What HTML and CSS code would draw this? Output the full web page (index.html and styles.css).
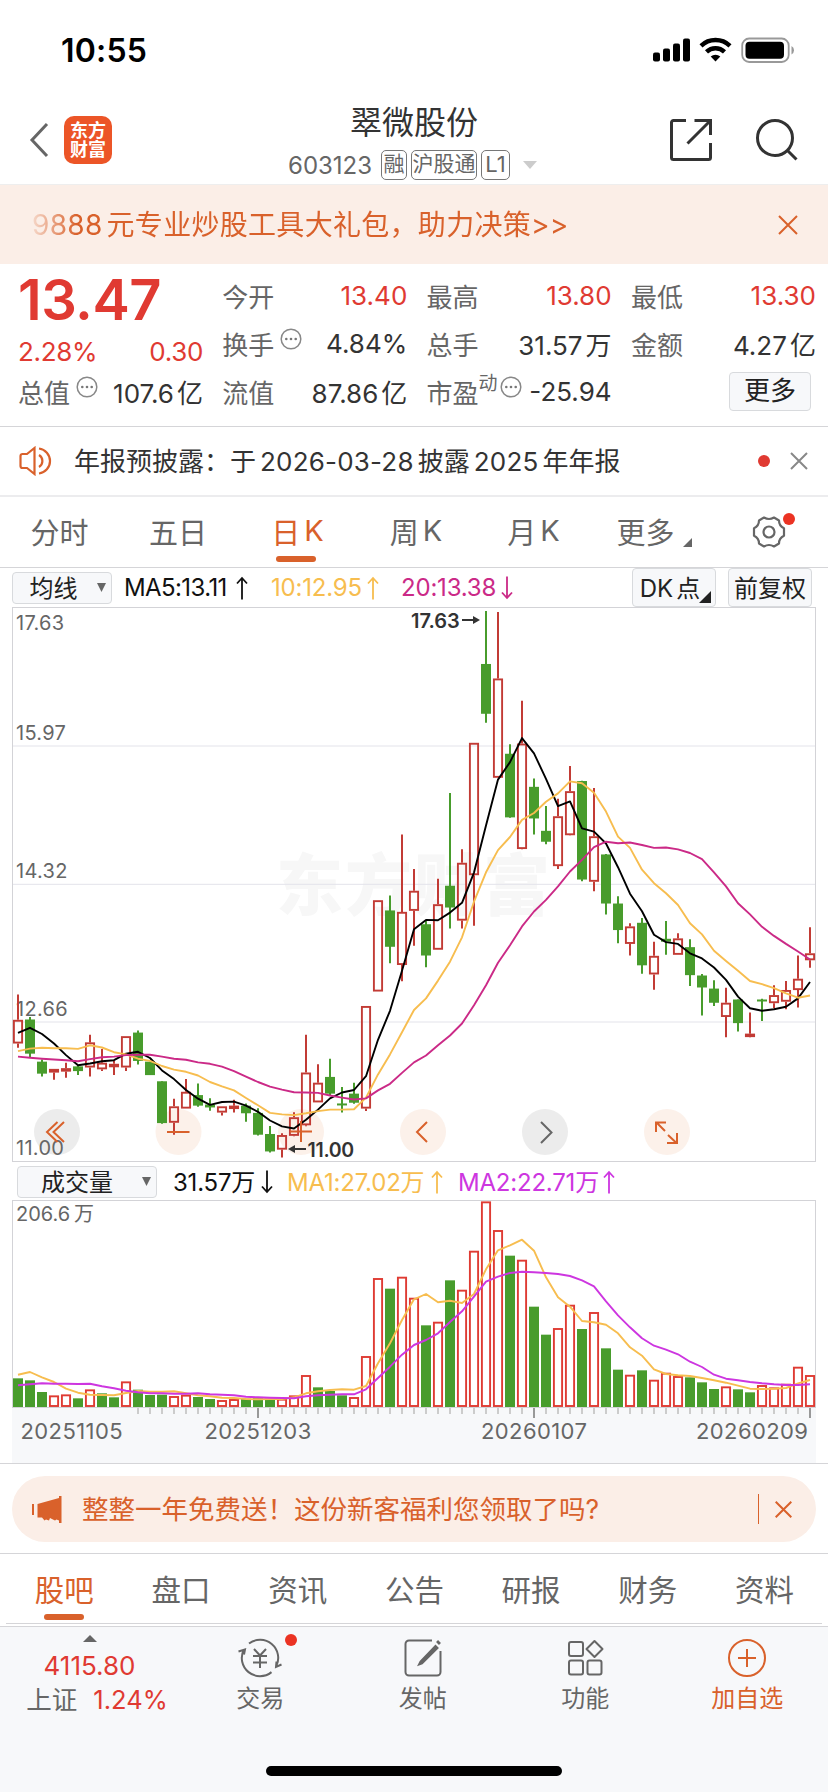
FILE: index.html
```html
<!DOCTYPE html>
<html lang="zh-CN">
<head>
<meta charset="utf-8">
<title>翠微股份 603123</title>
<link rel="stylesheet" href="styles.css">
</head>
<body>
<div class="app">
  <div class="status">
    <span class="clock">10:55</span>
    <svg class="status-icons" width="142" height="26" viewBox="0 0 142 26">
      <rect x="0" y="15.5" width="7" height="9" rx="2"/><rect x="10" y="11.5" width="7" height="13" rx="2"/><rect x="20" y="6.500" width="7" height="18" rx="2"/><rect x="30" y="1.500" width="7" height="23" rx="2"/>
      <g fill="none" stroke="#000" stroke-width="4.400"><path d="M48 8.800a21 21 0 0 1 29 0"/><path d="M53.500 14.800a13 13 0 0 1 18 0"/></g>
      <path d="M62.500 24.500l-4.800-4.900a7 7 0 0 1 9.600 0z"/>
      <rect x="89.200" y="1.500" width="46.500" height="23.500" rx="7" fill="none" stroke="#999" stroke-width="1.800"/>
      <rect x="92.500" y="4.800" width="38.500" height="17" rx="4"/>
      <path d="M138.500 9v8.500q2.500-1.500 2.500-4.200t-2.500-4.300z" fill="#999"/>
    </svg>
  </div>

  <header class="head">
    <div class="head-left">
      <svg width="20" height="36" viewBox="0 0 20 36"><path d="M18 2L3 18l15 16" fill="none" stroke="#666" stroke-width="3"/></svg>
      <div class="logo"><span>东方</span><span>财富</span></div>
    </div>
    <div class="head-mid">
      <h1>翠微股份</h1>
      <div class="code"><span class="num">603123</span><b class="tag t1">融</b><b class="tag t2">沪股通</b><b class="tag t3">L1</b><svg width="14" height="8"><path d="M0 0h14l-7 8z" fill="#ccc"/></svg></div>
    </div>
    <svg class="head-icons" width="130" height="44" viewBox="0 0 130 44" fill="none" stroke="#333" stroke-width="3">
      <path d="M17 2.500H4.500a2 2 0 0 0-2 2V39.500a2 2 0 0 0 2 2H39.500a2 2 0 0 0 2-2V25M25.500 2.500h16V17M41 3L18.500 25.500"/>
      <circle cx="106" cy="20" r="17.500"/><path d="M118.500 32.500l9 9"/>
    </svg>
  </header>

  <div class="banner"><p>9888<i></i>元专业炒股工具大礼包，助力决策&gt;&gt;</p><svg width="20" height="20"><path d="M1 1l18 18M19 1L1 19" stroke="#d9612b" stroke-width="2"/></svg></div>

  <section class="quote">
    <div class="col first">
      <div class="price">13.47</div>
      <div class="row chg"><span class="red">2.28%</span><span class="red">0.30</span></div>
      <div class="row"><span class="lb">总值<svg class="info"><use href="#dots"/></svg></span><span>107.6<i></i>亿</span></div>
    </div>
    <div class="col">
      <div class="row"><span class="lb">今开</span><span class="red">13.40</span></div>
      <div class="row"><span class="lb">换手<svg class="info"><use href="#dots"/></svg></span><span>4.84%</span></div>
      <div class="row"><span class="lb">流值</span><span>87.86<i></i>亿</span></div>
    </div>
    <div class="col">
      <div class="row"><span class="lb">最高</span><span class="red">13.80</span></div>
      <div class="row"><span class="lb">总手</span><span>31.57<i></i>万</span></div>
      <div class="row"><span class="lb">市盈<small>动</small><svg class="info"><use href="#dots"/></svg></span><span>-25.94</span></div>
    </div>
    <div class="col">
      <div class="row"><span class="lb">最低</span><span class="red">13.30</span></div>
      <div class="row"><span class="lb">金额</span><span>4.27<i></i>亿</span></div>
      <div class="row end"><button class="btn more">更多</button></div>
    </div>
  </section>

  <div class="notice">
    <svg width="34" height="30" viewBox="0 0 34 30" fill="none" stroke="#d9612b" stroke-width="2.200"><path d="M15.500 2v26L8 22H3.500a2 2 0 0 1-2-2V10a2 2 0 0 1 2-2H8zM20 9a7 7 0 0 1 0 12M20 2.500a12.600 12.600 0 0 1 0 25"/></svg>
    <p>年报预披露：于<i></i><span class="num">2026-03-28</span><i></i>披露<i></i><span class="num">2025</span><i></i>年年报</p>
    <span class="dot"></span>
    <svg width="18" height="18"><path d="M1 1l16 16M17 1L1 17" stroke="#888" stroke-width="2"/></svg>
  </div>

  <nav class="tabs">
    <a>分时</a><a>五日</a><a class="on">日<i></i>K</a><a>周<i></i>K</a><a>月<i></i>K</a>
    <a>更多<svg class="tri" width="9" height="9"><path d="M9 0v9H0z" fill="#666"/></svg></a>
    <a class="gear"><svg width="34" height="34" viewBox="-17 -17 34 34" fill="none" stroke="#666" stroke-width="2.200" stroke-linejoin="round"><path d="M-5-14.500Q0-11.500 5-14.500L10-11.500Q10-6 15-3.800V3.800Q10 6 10 11.500L5 14.500Q0 11.500-5 14.500L-10 11.500Q-10 6-15 3.800V-3.800Q-10-6-10-11.500Z"/><circle r="5.500"/></svg><span class="dot"></span></a>
  </nav>

  <div class="tools">
    <button class="btn ma"><span>均线</span><svg width="9" height="9"><path d="M0 0h9L4.500 9z" fill="#666"/></svg></button>
    <span class="v k">MA5:13.11</span><svg class="ar k"><use href="#up"/></svg>
    <span class="v y">10:12.95</span><svg class="ar y"><use href="#up"/></svg>
    <span class="v m">20:13.38</span><svg class="ar m"><use href="#down"/></svg>
    <button class="btn dk"><span>DK<i></i>点</span><svg width="12" height="12"><path d="M12 0v12H0z" fill="#222"/></svg></button>
    <button class="btn fq"><span>前复权</span></button>
  </div>

  <svg id="kline" class="kline" width="828" height="556" viewBox="0 0 828 556"></svg>

  <div class="tools vol">
    <button class="btn vl"><span>成交量</span><svg width="9" height="9"><path d="M0 0h9L4.500 9z" fill="#666"/></svg></button>
    <span class="v k">31.57万</span><svg class="ar k"><use href="#down"/></svg>
    <span class="v y">MA1:27.02万</span><svg class="ar y"><use href="#up"/></svg>
    <span class="v p">MA2:22.71万</span><svg class="ar p"><use href="#up"/></svg>
  </div>

  <svg id="volume" class="volume" width="828" height="263" viewBox="0 0 828 263"></svg>

  <div class="promo">
    <div class="pill">
      <svg width="30" height="27" viewBox="0 0 30 27" fill="#d9612b"><rect x="0" y="8" width="2" height="11"/><path d="M5.500 8L27 2V0h2.500v27H27v-2.500L24.500 23.500 23 24.500 18 22l-1 2.500-3-1-1.500 1-2.500-3H5.500z"/></svg>
      <p>整整一年免费送！这份新客福利您领取了吗?</p>
      <span class="bar"></span>
      <svg width="17" height="17"><path d="M0.700 0.700l15.600 15.600M16.300 0.700L0.700 16.300" stroke="#d9612b" stroke-width="2"/></svg>
    </div>
  </div>

  <nav class="sub"><a class="on">股吧</a><a>盘口</a><a>资讯</a><a>公告</a><a>研报</a><a>财务</a><a>资料</a></nav>

  <footer class="foot">
    <div class="index">
      <svg width="14" height="7"><path d="M0 7h14L7 0z" fill="#666"/></svg>
      <div class="pt red">4115.80</div>
      <div class="pc"><span>上证</span><span class="red">1.24%</span></div>
    </div>
    <div class="item">
      <svg width="46" height="40" viewBox="-23 -20 46 40" fill="none" stroke="#666" stroke-width="2"><path d="M-11-14.500A18.200 18.200 0 0 1 16.200 8.300M11.500 14.100A18.200 18.200 0 0 1-16.200-8.300M-21.500-6.500l6.500-2-1 5M21.500 6.500l-5.500 2.500 0.500-5.500M-6-9L0-2.500 6-9M-7-2H7M-7 4.500H7M0-2.500V10"/></svg>
      <span>交易</span><b class="dot"></b>
    </div>
    <div class="item">
      <svg width="46" height="40" viewBox="-23 -20 46 40" fill="none" stroke="#666" stroke-width="2"><path d="M9-17.500H-14a3.500 3.500 0 0 0-3.500 3.500V14a3.500 3.500 0 0 0 3.500 3.500H14a3.500 3.500 0 0 0 3.500-3.500V-7"/><path d="M12.500-12L-2.500 3.500-4 6.500-1 5.500 14.500-10z" fill="#666"/><path d="M14.500-14.500l2-2" stroke-width="4"/></svg>
      <span>发帖</span>
    </div>
    <div class="item">
      <svg width="46" height="40" viewBox="-23 -20 46 40" fill="none" stroke="#666" stroke-width="2"><rect x="-16" y="-16" width="14" height="14" rx="2"/><rect x="-16" y="2.500" width="14" height="14" rx="2"/><rect x="2.500" y="2.500" width="14" height="14" rx="2"/><path d="M9.500-17l8 8-8 8-8-8z" stroke-linejoin="round"/></svg>
      <span>功能</span>
    </div>
    <div class="item add">
      <svg width="46" height="40" viewBox="-23 -20 46 40" fill="none" stroke="#d9612b" stroke-width="2"><circle r="18"/><path d="M-9 0H9M0-9V9"/></svg>
      <span>加自选</span>
    </div>
    <div class="home"></div>
  </footer>
</div>

<svg class="defs" width="0" height="0">
  <symbol id="dots" viewBox="0 0 22 22"><circle cx="11" cy="11" r="9.800" fill="none" stroke="#888" stroke-width="1.500"/><circle cx="6.300" cy="11" r="1.300" fill="#777"/><circle cx="11" cy="11" r="1.300" fill="#777"/><circle cx="15.700" cy="11" r="1.300" fill="#777"/></symbol>
  <symbol id="up" viewBox="0 0 12 24"><path d="M6 23.500V2M1 7.500L6 2l5 5.500" fill="none" stroke="currentColor" stroke-width="1.800"/></symbol>
  <symbol id="down" viewBox="0 0 12 24"><path d="M6 0.500V22M1 16.500L6 22l5-5.500" fill="none" stroke="currentColor" stroke-width="1.800"/></symbol>
</svg>
<script src="chart.js"></script>
</body>
</html>
```
FILE: styles.css
```css
* { box-sizing: border-box; }
body { margin: 0; background: #fff; font-family: Inter, "Noto Sans CJK SC", sans-serif; color: #333; }
.app { width: 828px; height: 1792px; overflow: hidden; display: flex; flex-direction: column; background: #fff; }
.app > * { flex: none; }
p, h1 { margin: 0; font-weight: 400; }
i { display: inline-block; width: 4px; }
svg { display: block; flex: none; }
.defs { position: absolute; }
.red { color: #e03a32; }
.dot { width: 12px; height: 12px; border-radius: 50%; background: #e03a32; }

.status { height: 88px; display: flex; align-items: flex-start; justify-content: space-between; padding: 37px 33px 0 61px; }
.clock { font-size: 32px; font-weight: 600; line-height: 28px; color: #000; letter-spacing: 0.200px; }

.head { height: 96px; display: grid; grid-template-columns: 200px 1fr 200px; }
.head-left { display: flex; align-items: center; padding: 8px 0 0 29px; gap: 15px; }
.logo { width: 48px; height: 48px; border-radius: 10px; background: #ec5527; color: #fff; font-size: 18px; font-weight: 700; line-height: 19px; display: flex; flex-direction: column; align-items: center; justify-content: center; }
.head-mid { display: flex; flex-direction: column; align-items: center; padding-top: 15px; }
.head-mid h1 { font-size: 32px; line-height: 40px; }
.code { display: flex; align-items: center; height: 30px; margin-top: 7px; color: #666; font-size: 24px; padding-right: 4px; margin-left: 1px; }
.code .num { width: 93px; letter-spacing: 0; }
.tag { height: 30px; border: 1.500px solid #777; border-radius: 5px; font-weight: 400; font-size: 21px; line-height: 26px; text-align: center; margin-right: 4px; }
.t1 { width: 26px; } .t2 { width: 66px; } .t3 { width: 29px; font-size: 22px; margin-right: 13px; }
.head-icons { margin: 30px 0 0 41px; }

.banner { height: 80px; background: #fbeee7; border-top: 1px solid #eee; color: #d9612b; display: flex; align-items: center; justify-content: space-between; padding: 0 30px 0 32px; }
.banner p { font-size: 28px; line-height: 40px; letter-spacing: 0.300px; white-space: nowrap; -webkit-mask-image: linear-gradient(90deg, rgba(0,0,0,.15), #000 45px); mask-image: linear-gradient(90deg, rgba(0,0,0,.15), #000 45px); }

.quote { height: 163px; border-bottom: 1px solid #d5d5d8; padding: 7px 0 0 18px; display: grid; grid-template-columns: repeat(4, 185px); column-gap: 19.300px; font-size: 26px; }
.row { height: 48px; display: flex; align-items: center; justify-content: space-between; white-space: nowrap; }
.row i { width: 3px; }
.lb { color: #666; display: flex; align-items: center; }
.info { width: 22px; height: 22px; margin: -8px 0 0 6px; }
.lb small { font-size: 19px; margin-top: -14px; line-height: 20px; }
.lb small + .info { margin-left: 2px; }
.price { height: 55px; line-height: 55px; margin-top: 2px; font-size: 56px; font-weight: 600; color: #e03a32; letter-spacing: -0.500px; }
.chg { height: 39px; padding-top: 8px; letter-spacing: -0.300px; }
.row.end { justify-content: flex-end; }
.btn { font: inherit; color: #222; background: #f7f8fa; border: 1.500px solid #d8dadd; border-radius: 4px; padding: 0; display: flex; align-items: center; justify-content: center; }
.more { width: 82px; height: 39px; margin: 0 5px 0 0; font-size: 26px; line-height: 30px; }

.notice { height: 70px; border-bottom: 2px solid #ececee; display: flex; align-items: center; padding: 0 20px 0 19px; }
.notice p { font-size: 26px; margin-left: 21px; flex: 1; padding-bottom: 4px; }
.notice .num { letter-spacing: 0.200px; }
.notice .dot { margin-right: 20px; }

.tabs { height: 71px; border-bottom: 1px solid #d5d5d8; display: grid; grid-template-columns: 119px 118px 121px 116px 119px 105px 1fr; font-size: 29px; color: #666; }
.tabs a { display: flex; align-items: center; justify-content: center; position: relative; padding-bottom: 3px; }
.tabs i { width: 4px; }
.tabs .on, .sub .on { color: #d9612b; }
.on::after { content: ""; position: absolute; bottom: 5px; left: calc(50% - 20px); width: 40px; height: 6px; border-radius: 3px; background: #d9612b; }
.tabs .on::after { left: calc(50% - 22px); }
.tri { position: absolute; left: 90px; top: 41px; }
.tabs .gear { padding: 0 0 1px 66px; justify-content: flex-start; margin-left: -12px; }
.gear .dot { position: absolute; left: 97px; top: 16px; background: #eb3323; }

.tools { height: 39px; display: flex; align-items: center; padding-left: 12px; font-size: 24px; }
.tools .v { white-space: nowrap; flex: none; }
.tools .btn { flex: none; }
.tools .btn span { margin-top: -2px; }
.tools .btn svg { margin-left: 19px; }
.ma { width: 100px; height: 32px; padding-left: 11px; margin-right: 12px; }
.ma + .v { width: 112px; letter-spacing: -0.600px; }
.ar { width: 12px; height: 24px; margin-right: 22px; }
.tools .y { color: #f7bd4f; } .tools .m { color: #cb2a87; } .tools .p { color: #cd36e0; } .tools .k { color: #111; }
.v.y { width: 96px; margin-left: 1px; } .v.m { width: 100px; }
.v { letter-spacing: -0.200px; }
.dk { width: 84px; height: 39px; margin-left: 97px; position: relative; padding-right: 8px; }
.tools .dk svg { position: absolute; right: 4px; bottom: 3px; margin: 0; }
.dk i { width: 3px; }
.fq { width: 84px; height: 39px; margin-left: 12px; }

.vol { height: 37px; padding-left: 17px; }
.vl { width: 140px; height: 32px; padding-left: 18px; margin-right: 16px; }
.vol .v { margin-top: -2px; }
.vol .btn svg { margin-left: 29px; }
.vol .v.k { width: 88px; } .vol .v.y { width: 144px; margin-left: -8px; } .vol .v.p { width: 145px; margin-left: -7px; }
.kline text, .volume text { font-family: Inter, "Noto Sans CJK SC", sans-serif; }

.promo { height: 91px; border-top: 1px solid #d5d5d8; border-bottom: 1px solid #d5d5d8; padding: 12px 12px 0; }
.pill { height: 66px; border-radius: 33px; background: #fbeee7; color: #d9612b; display: flex; align-items: center; padding: 0 24px 0 20px; }
.pill p { font-size: 26.500px; margin-left: 20px; flex: 1; white-space: nowrap; padding-bottom: 4px; }
.bar { width: 1.500px; height: 30px; background: #d9612b; margin-right: 16px; }

.sub { height: 70px; margin: 0 6px; border-bottom: 1px solid #d5d5d8; display: grid; grid-template-columns: repeat(7, 116.700px); font-size: 29.500px; color: #666; }
.sub a { display: flex; align-items: center; justify-content: center; position: relative; padding-bottom: 2px; }
.sub .on::after { bottom: 3px; }

.foot { margin-top: 2px; height: 166px; border-top: 1px solid #d5d5d8; background: #f7f8fa; display: grid; grid-template-columns: 179px 162.500px 162.500px 162.500px 161.500px; position: relative; font-size: 24px; color: #666; }
.index { display: flex; flex-direction: column; align-items: center; padding-top: 8px; }
.pt { font-size: 26px; line-height: 30px; margin-top: 9px; }
.pc { display: flex; gap: 16px; margin-top: 2px; line-height: 34px; font-size: 25.500px; padding-left: 15px; }
.item { display: flex; flex-direction: column; align-items: center; padding-top: 11px; position: relative; }
.item span { line-height: 30px; margin-top: 6px; }
.item.add { color: #d9612b; }
.item .dot { position: absolute; left: 105.500px; top: 7px; background: #eb3323; }
.home { position: absolute; left: 266px; top: 139px; width: 296px; height: 10px; border-radius: 5px; background: #000; }
```
FILE: chart.js
```js
const NS = "http://www.w3.org/2000/svg";
const RED = "#c23b35", GREEN = "#489c2c", VRED = "#df3b33";
const STEP = 12, X0 = 18;
const x = i => X0 + STEP * i;

function add(parent, tag, attrs, text) {
  const n = document.createElementNS(NS, tag);
  for (const k in attrs) n.setAttribute(k, attrs[k]);
  if (text) n.textContent = text;
  parent.appendChild(n);
  return n;
}
function line(parent, values, y, color) {
  add(parent, "polyline", { points: values.map((v, i) => x(i) + "," + y(v).toFixed(1)).join(" "), fill: "none", stroke: color, "stroke-width": 1.9, "stroke-linejoin": "round" });
}

// Each candle: colour, high, body top, body bottom, low (chart units).
const candles = `r 1085 1155 1220 1232
g 1147 1154 1248 1260
g 1264 1270 1303 1311
r 1290 1290 1300 1320
r 1273 1288 1297 1314
g 1280 1283 1296 1307
r 1196 1217 1286 1311
r 1235 1273 1291 1296
r 1268 1276 1285 1307
r 1200 1200 1286 1296
g 1184 1190 1268 1278
g 1270 1270 1307 1307
g 1324 1324 1439 1441
r 1372 1393 1438 1471
r 1318 1353 1399 1399
g 1330 1362 1391 1394
g 1371 1388 1396 1405
r 1393 1393 1410 1418
r 1375 1391 1398 1410
g 1385 1391 1412 1435
g 1398 1411 1471 1473
g 1447 1469 1517 1520
r 1467 1472 1512 1534
r 1409 1423 1474 1475
r 1196 1300 1445 1448
r 1277 1328 1382 1382
g 1262 1312 1358 1362
g 1340 1385 1390 1410
g 1328 1358 1383 1386
r 1117 1117 1399 1406
r 826 826 1077 1077
g 813 854 954 999
r 645 858 1004 1049
r 740 800 855 951
g 880 892 978 1010
r 767 837 962 962
g 531 786 846 904
r 686 723 882 904
r 393 393 757 896
g 30 176 313 338
r 33 216 489 489
g 397 423 598 599
r 277 395 685 686
g 491 514 601 645
g 567 635 665 672
r 547 595 732 740
r 457 526 647 648
g 497 498 769 774
r 517 650 775 801
g 699 700 835 865
g 815 835 908 944
r 889 898 946 978
g 875 888 1005 1028
r 940 979 1030 1072
g 883 932 940 976
r 917 931 976 976
g 933 955 1032 1062
g 1029 1033 1066 1143
g 1046 1069 1108 1117
r 1067 1108 1147 1203
g 1099 1099 1164 1187
r 1135 1193 1202 1203
g 1097 1099 1104 1158
r 1060 1087 1109 1123
r 1048 1073 1105 1126
r 978 1042 1073 1121
r 900 972 991 1012`.split("\n").map(l => { const p = l.split(" "); return [p[0], +p[1], +p[2], +p[3], +p[4]]; });

const ma5 = [1191,1177,1194,1220,1252,1280,1275,1269,1266,1248,1243,1260,1294,1318,1348,1372,1389,1381,1380,1391,1408,1432,1448,1454,1430,1402,1371,1355,1348,1310,1210,1130,1020,906,880,881,860,833,750,620,494,446,380,422,492,567,554,628,637,670,735,808,856,921,941,946,972,986,1011,1045,1091,1123,1130,1126,1119,1096,1051];
const ma10 = [1241,1234,1232,1233,1233,1235,1225,1231,1244,1250,1262,1268,1282,1292,1298,1308,1326,1338,1349,1370,1390,1411,1415,1417,1412,1406,1402,1402,1401,1369,1305,1250,1189,1128,1096,1047,995,928,830,749,688,652,605,586,555,532,499,504,530,582,651,682,742,779,807,839,889,920,965,993,1020,1048,1057,1068,1082,1094,1088];
const ma20 = [1256,1259,1262,1264,1266,1269,1263,1258,1256,1252,1251,1251,1256,1262,1265,1272,1276,1284,1296,1311,1326,1339,1347,1354,1355,1356,1363,1369,1374,1371,1349,1331,1301,1272,1253,1225,1198,1165,1115,1060,998,950,898,857,825,788,747,715,680,665,669,667,674,682,681,686,696,713,749,788,834,865,899,924,946,967,989];

const k = document.getElementById("kline");
const ky = v => v / 2.751 - 7;

add(k, "text", { x: 276, y: 303, "font-size": 67, "font-weight": 900, fill: "#f7f7f7", "letter-spacing": 2 }, "东方财富");
[139, 277.3, 415].forEach(y => add(k, "line", { x1: 13, x2: 815, y1: y, y2: y, stroke: "#e3e3ea" }));
add(k, "rect", { x: 12.5, y: 0.5, width: 803, height: 554, fill: "none", stroke: "#d3d3d7" });

// Round controls lie under the candles and the axis labels.
[[57, "#ececec"], [178.5, "#fcf1ea"], [301, "#fcf1ea"], [423, "#fcf1ea"], [545, "#ececec"], [667, "#fcf1ea"]].forEach(c => add(k, "circle", { cx: c[0], cy: 525, r: 23, fill: c[1] }));
[["17.63", 23], ["15.97", 133], ["14.32", 271], ["12.66", 409], ["11.00", 548]].forEach(t => add(k, "text", { x: 16, y: t[1], "font-size": 20, fill: "#666", "letter-spacing": 0.3 }, t[0]));

candles.forEach(([c, h, t, b, l], i) => {
  const cx = x(i), T = ky(t), B = ky(b), col = c === "r" ? RED : GREEN;
  if (c === "g") {
    add(k, "path", { d: `M${cx} ${ky(h)}V${ky(l)}`, stroke: col, "stroke-width": 2 });
    add(k, "rect", { x: cx - 5, y: T, width: 10, height: Math.max(2, B - T), fill: col });
  } else {
    add(k, "path", { d: `M${cx} ${ky(h)}V${T}M${cx} ${B}V${ky(l)}`, stroke: col, "stroke-width": 2 });
    add(k, "rect", { x: cx - 4.1, y: T + 0.9, width: 8.2, height: Math.max(1.6, B - T - 1.8), fill: "none", stroke: col, "stroke-width": 1.9 });
  }
});
line(k, ma5, ky, "#000");
line(k, ma10, ky, "#f7bd4f");
line(k, ma20, ky, "#cb2a87");

const icon = (d, color) => add(k, "path", { d, fill: "none", stroke: color, "stroke-width": 2 });
icon("M57.500 515L47 525l10.500 10M64 515l-10.500 10L64 535", "#d9612b");
icon("M167 525h22.500", "#d9612b");
icon("M290 524.500h22M301 514v21", "#d9612b");
icon("M427 515l-10 10 10 10", "#d9612b");
icon("M541 515l10.500 10.500L541 536", "#666");
icon("M665 524l-8.500-8.500M656 525v-9.500h10M668 528l8.500 8M677 526v10h-10", "#d9612b");

add(k, "text", { x: 411, y: 20.5, "font-size": 20, "font-weight": 600, fill: "#333" }, "17.63");
add(k, "path", { d: "M462 13h13", stroke: "#333", "stroke-width": 2 });
add(k, "path", { d: "M480 13l-7-4v8z", fill: "#333" });
add(k, "text", { x: 307.5, y: 549.5, "font-size": 19.5, "font-weight": 600, fill: "#333", "letter-spacing": -0.3 }, "11.00");
add(k, "path", { d: "M293 542h13", stroke: "#333", "stroke-width": 2 });
add(k, "path", { d: "M288 542l7-4v8z", fill: "#333" });

const volTop = [655,661,696,706,703,715,688,700,712,664,689,705,704,708,704,711,717,720,717,716,712,716,716,706,645,682,693,706,711,588,354,386,350,413,496,485,361,389,272,124,210,287,299,440,524,504,434,507,456,565,629,644,631,659,638,648,652,667,687,679,688,697,675,682,671,620,645];
const volColor = "gggrrgrggrgggrrggrrgggrrrgggrrrgrrgrgrrrrgrggrrgrggrgrrrgggrggrrrrr";
const vma1 = [644,636,652,666,686,698,704,705,706,699,693,695,695,694,700,706,709,713,714,717,718,717,717,712,700,694,690,688,689,678,610,550,480,418,402,427,422,429,402,328,271,256,239,272,352,412,440,483,487,494,520,562,587,628,642,646,648,654,661,668,677,686,687,686,684,670,660];
const vma2 = [676,673,670,671,671,672,671,679,685,692,697,700,700,701,701,700,703,704,706,710,712,713,714,715,709,706,704,703,703,688,654,620,584,555,540,520,486,454,410,365,350,339,335,337,339,342,348,361,379,424,466,502,535,557,569,583,605,621,644,656,661,666,670,673,675,675,673];

const v = document.getElementById("volume");
const vy = n => n / 3 - 40;
add(v, "rect", { x: 12, y: 207, width: 804, height: 56, fill: "#f7f8fa" });
add(v, "rect", { x: 12.5, y: 0.5, width: 803, height: 207, fill: "none", stroke: "#d3d3d7" });
add(v, "text", { x: 16, y: 21, "font-size": 20, fill: "#666" }, "206.6");
add(v, "text", { x: 74, y: 21, "font-size": 20, fill: "#666" }, "万");
volTop.forEach((t, i) => {
  const T = vy(t);
  if (volColor[i] === "g") add(v, "rect", { x: x(i) - 5, y: T, width: 10, height: 207 - T, fill: GREEN });
  else add(v, "rect", { x: x(i) - 4.1, y: T + 1, width: 8.2, height: 205 - T, fill: "none", stroke: VRED, "stroke-width": 1.9 });
});
line(v, vma1, vy, "#f7bd4f");
line(v, vma2, vy, "#cd36e0");
for (let i = 10; i <= 66; i++) {
  const major = i === 20 || i === 43 || i === 66;
  add(v, "line", { x1: x(i), x2: x(i), y1: 208, y2: major ? 218 : 214, stroke: major ? "#999" : "#ccc", "stroke-width": 2 });
}
[["20251105", 20.5], ["20251203", 204.5], ["20260107", 481], ["20260209", 696]].forEach(t => add(v, "text", { x: t[1], y: 239, "font-size": 22, fill: "#666", "letter-spacing": 0.4 }, t[0]));
```
